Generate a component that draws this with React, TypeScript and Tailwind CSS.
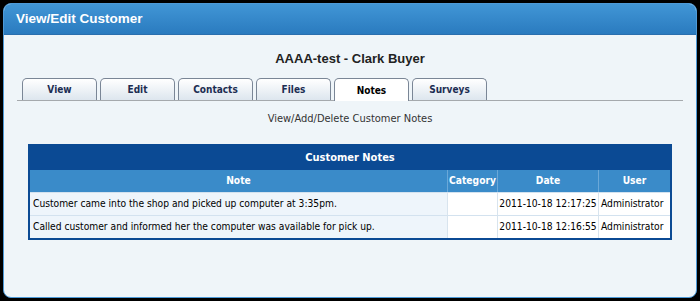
const tabs = ["View", "Edit", "Contacts", "Files", "Notes", "Surveys"];

const notes = [
  {
    note: "Customer came into the shop and picked up computer at 3:35pm.",
    category: "",
    date: "2011-10-18 12:17:25",
    user: "Administrator",
  },
  {
    note: "Called customer and informed her the computer was available for pick up.",
    category: "",
    date: "2011-10-18 12:16:55",
    user: "Administrator",
  },
];

export default function App() {
  return (
    <div className="w-[700px] h-[301px] bg-black p-[3px] font-['DejaVu_Sans_Condensed','DejaVu_Sans',sans-serif]">
      <div className="h-[295px] rounded-[8px] border border-[#4d9ad8] bg-[#eff5f9] overflow-hidden flex flex-col">
        <div className="h-[31px] shrink-0 bg-gradient-to-b from-[#4196d6] to-[#2a7bbf] flex items-center pl-[12px] border-b border-[#2a6fae]">
          <span className="text-white font-bold text-[13.5px] font-['Liberation_Sans',sans-serif]">
            View/Edit Customer
          </span>
        </div>
        <div className="flex flex-col px-[13px]">
          <div className="h-[43px] flex items-center justify-center pt-[4px]">
            <span className="font-['Liberation_Sans',sans-serif] font-bold text-[13px] text-[#222]">
              AAAA-test - Clark Buyer
            </span>
          </div>
          <div className="flex gap-[3px] pl-[5px] border-b border-[#a5a9ad] h-[23px]">
            {tabs.map((t) => (
              <div
                key={t}
                className={
                  t === "Notes"
                    ? "w-[75px] h-[23px] rounded-t-[5px] border border-b-0 border-[#7a8696] bg-white flex items-center justify-center text-[10px] font-bold text-black"
                    : "w-[75px] h-[22px] rounded-t-[5px] border border-b-0 border-[#7a8696] bg-gradient-to-b from-white to-[#dde6ee] flex items-center justify-center text-[10px] font-bold text-[#1b2d52]"
                }
              >
                {t}
              </div>
            ))}
          </div>
          <div className="h-[43px] flex items-center justify-center pb-[6px] text-[11px] text-[#333]">
            View/Add/Delete Customer Notes
          </div>
          <div className="ml-[11px] w-[644px] border-2 border-[#0b4a94] bg-[#0b4a94]">
            <div className="h-[24px] flex items-center justify-center text-white font-bold text-[11px]">
              Customer Notes
            </div>
            <div className="grid grid-cols-[418px_50px_101px_71px] text-[10.2px]">
              <div className="h-[22px] bg-[#3a8bc9] text-white font-bold flex items-center justify-center border-r border-[#6aa8d8]">
                Note
              </div>
              <div className="h-[22px] bg-[#3a8bc9] text-white font-bold flex items-center justify-center border-r border-[#6aa8d8]">
                Category
              </div>
              <div className="h-[22px] bg-[#3a8bc9] text-white font-bold flex items-center justify-center border-r border-[#6aa8d8]">
                Date
              </div>
              <div className="h-[22px] bg-[#3a8bc9] text-white font-bold flex items-center justify-center">
                User
              </div>
              {notes.map((n, i) => (
                <div key={i} className="contents">
                  <div className="h-[23px] bg-[#eef5fb] border-t border-[#d3e2ef] border-r border-r-[#d8e4ee] flex items-center pl-[3px] text-black whitespace-nowrap overflow-hidden">
                    {n.note}
                  </div>
                  <div className="h-[23px] bg-white border-t border-[#d3e2ef] border-r border-r-[#d8e4ee]">
                    {n.category}
                  </div>
                  <div className="h-[23px] bg-white border-t border-[#d3e2ef] border-r border-r-[#d8e4ee] flex items-center justify-center text-black whitespace-nowrap">
                    {n.date}
                  </div>
                  <div className="h-[23px] bg-white border-t border-[#d3e2ef] flex items-center pl-[2px] text-black whitespace-nowrap">
                    {n.user}
                  </div>
                </div>
              ))}
            </div>
          </div>
        </div>
      </div>
    </div>
  );
}
